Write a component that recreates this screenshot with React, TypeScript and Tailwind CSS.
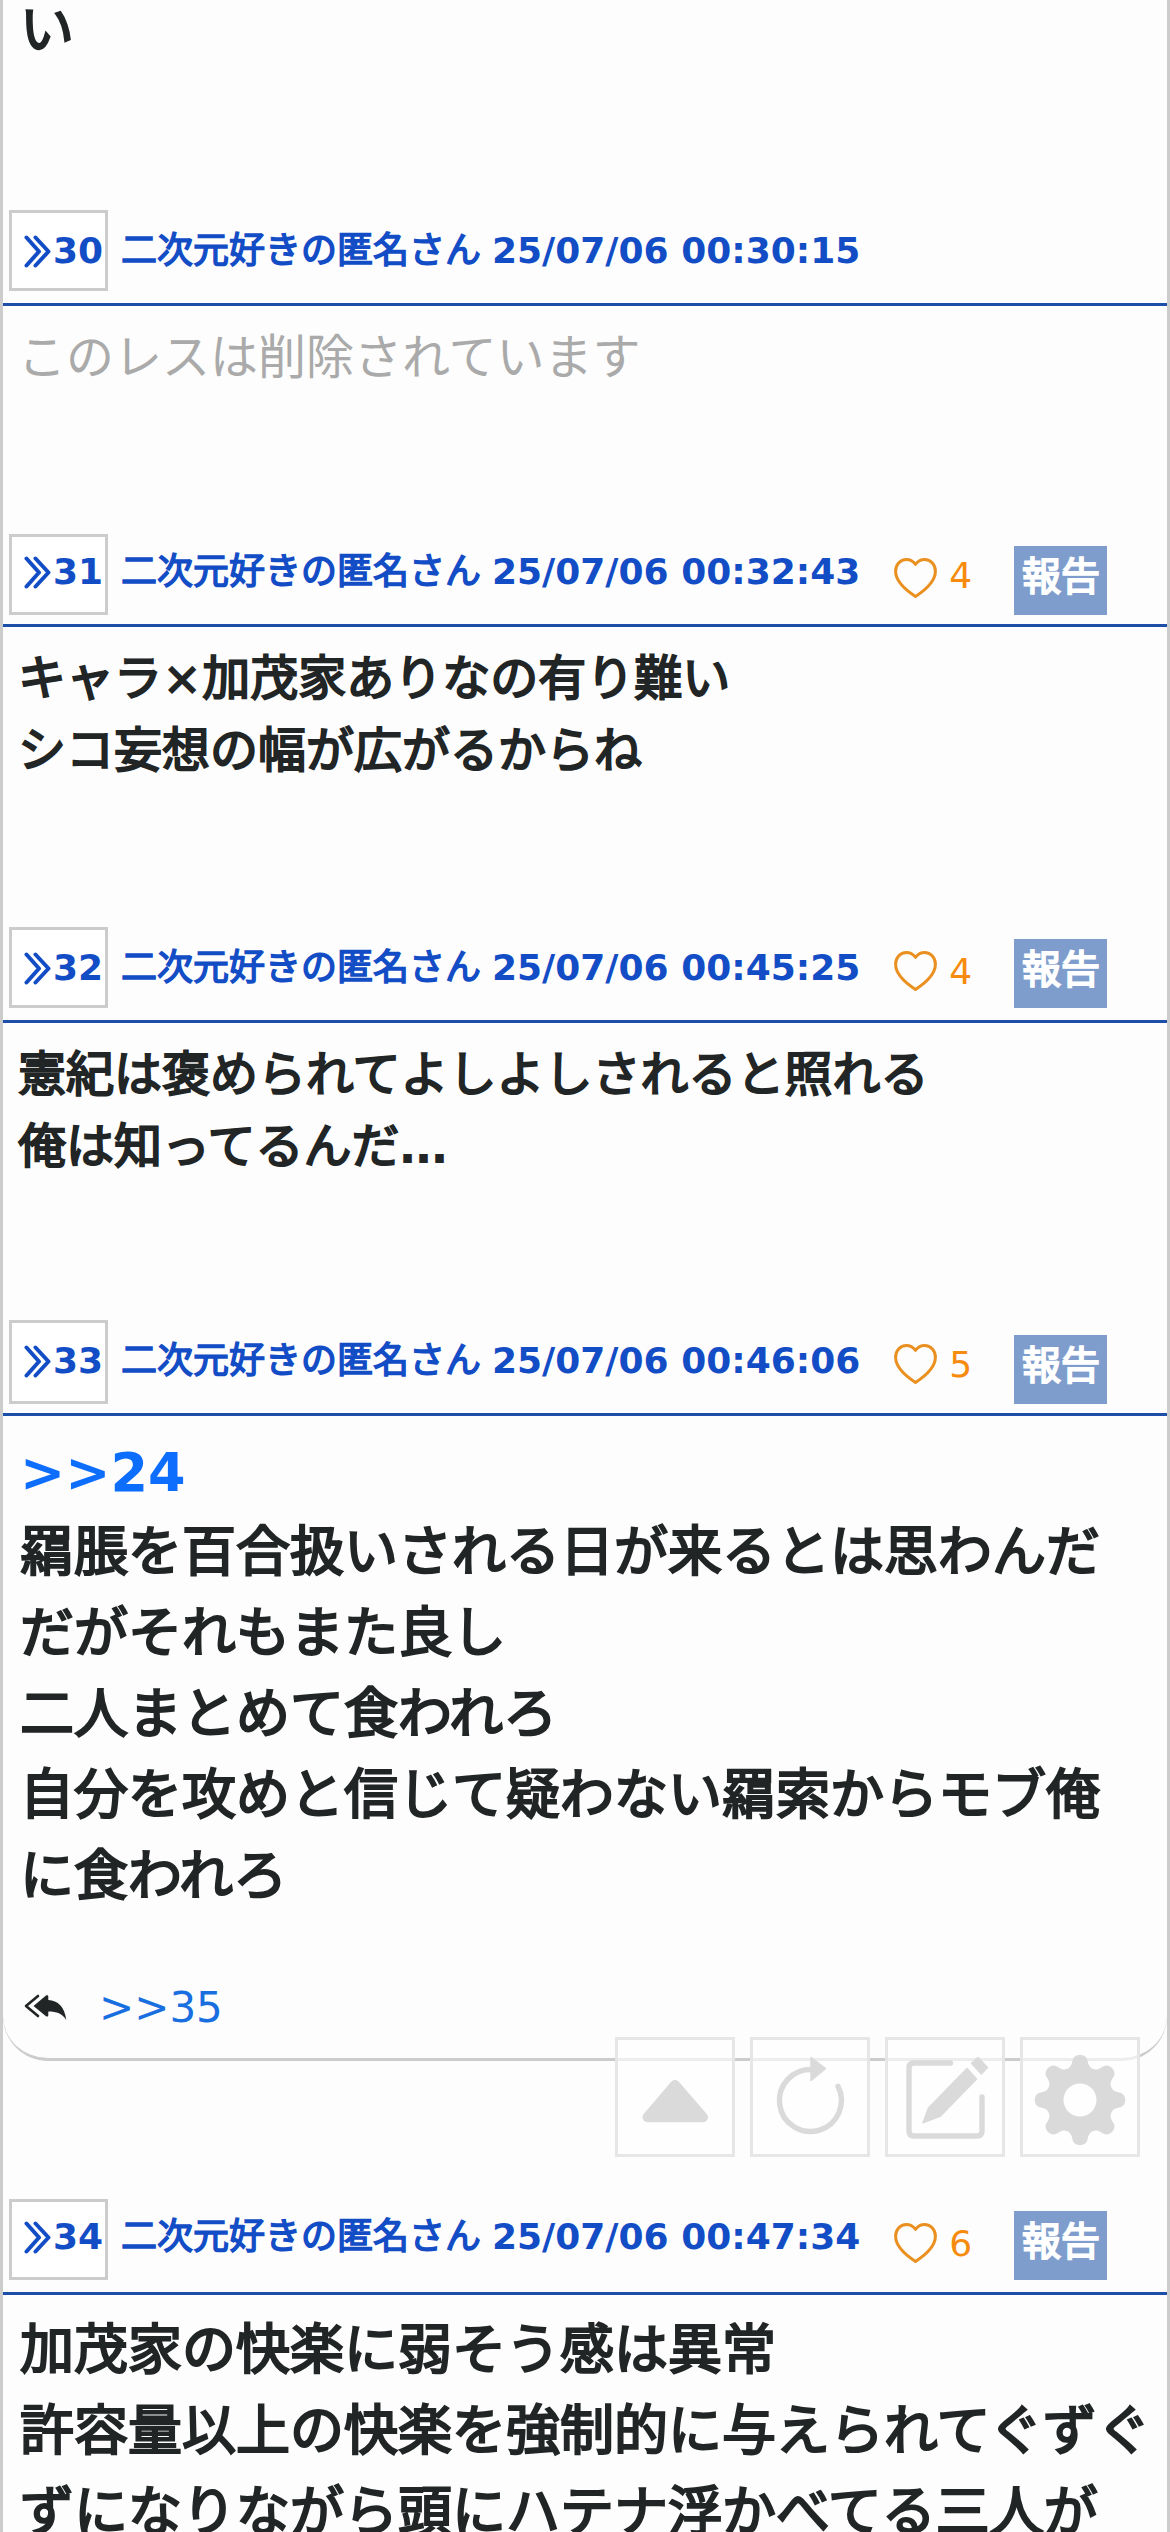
type Post = {
    id: number
    date: string
    likes?: number
    boxClass: string
    nameClass: string
    heartClass: string
    reportClass: string
    bodyClass: string
    textClass: string
    anchor?: string
    lines: string[]
    replies?: string
}

const posts: Post[] = [
    {
        id: 30,
        date: "25/07/06 00:30:15",
        boxClass: "h-[81px]",
        nameClass: "mt-[14px]",
        heartClass: "mt-6",
        reportClass: "mt-[15px]",
        bodyClass: "h-[225px]",
        textClass: "text-[48px] leading-[72px] text-[#aaaaaa]",
        lines: ["このレスは削除されています"],
    },
    {
        id: 31,
        date: "25/07/06 00:32:43",
        likes: 4,
        boxClass: "mt-[3px] h-[81px]",
        nameClass: "mt-[14px]",
        heartClass: "mt-[27px]",
        reportClass: "mt-[15px]",
        bodyClass: "h-[300px]",
        textClass: "text-[48px] leading-[72px] text-[#212525] [-webkit-text-stroke:2px]",
        lines: ["キャラ×加茂家ありなの有り難い", "シコ妄想の幅が広がるからね"],
    },
    {
        id: 32,
        date: "25/07/06 00:45:25",
        likes: 4,
        boxClass: "h-[81px]",
        nameClass: "mt-[14px]",
        heartClass: "mt-6",
        reportClass: "mt-3",
        bodyClass: "h-[297px]",
        textClass: "text-[48px] leading-[72px] text-[#212525] [-webkit-text-stroke:2px]",
        lines: ["憲紀は褒められてよしよしされると照れる", "俺は知ってるんだ…"],
    },
    {
        id: 33,
        date: "25/07/06 00:46:06",
        likes: 5,
        boxClass: "h-[84px]",
        nameClass: "mt-[14px]",
        heartClass: "mt-6",
        reportClass: "mt-[15px]",
        bodyClass: "mb-[138px] h-[645px] rounded-b-[45px] border-b-[3px] border-[#cccccc]",
        textClass: "pl-0.5 text-[54px] leading-[81px] text-[#212525] [-webkit-text-stroke:2.2px]",
        anchor: ">>24",
        lines: [
            "羂脹を百合扱いされる日が来るとは思わんだ",
            "だがそれもまた良し",
            "二人まとめて食われろ",
            "自分を攻めと信じて疑わない羂索からモブ俺",
            "に食われろ",
        ],
        replies: ">>35",
    },
    {
        id: 34,
        date: "25/07/06 00:47:34",
        likes: 6,
        boxClass: "h-[81px]",
        nameClass: "mt-[11px]",
        heartClass: "mt-6",
        reportClass: "mt-3",
        bodyClass: "h-[300px]",
        textClass: "pl-0.5 text-[54px] leading-[81px] text-[#212525] [-webkit-text-stroke:2.2px]",
        lines: [
            "加茂家の快楽に弱そう感は異常",
            "許容量以上の快楽を強制的に与えられてぐずぐ",
            "ずになりながら頭にハテナ浮かべてる三人が",
        ],
    },
]

// eight soft teeth around the centre of the 120px button
const gearOutline = Array.from({ length: 240 }, (_, i) => {
    const t = (i / 240) * Math.PI * 2
    const a = t + 0.03 * Math.sin(t * 16)
    const r = 39.5 + 5.7 * Math.cos(t * 8)
    return `${(60 + r * Math.sin(a)).toFixed(2)} ${(63 - r * Math.cos(a)).toFixed(2)}`
}).join("L")

function ChevronsIcon() {
    return (
        <svg className="h-[33px] w-7 shrink-0" viewBox="0 0 28 33" fill="none" stroke="currentColor" strokeWidth="4" strokeLinecap="round" strokeLinejoin="round">
            <path d="M3.5 2.5 16 16.5 3.5 30.5M12.5 2.5 25.500 16.5 12.5 30.5" />
        </svg>
    )
}

function HeartIcon() {
    return (
        <svg className="h-10 w-[43px] shrink-0" viewBox="0 0 43 40" fill="none" stroke="#ea9020" strokeWidth="3" strokeLinejoin="round">
            <path d="M21.5 6.3C19 3.3 16 1.6 12.5 1.6 6 1.6 1.6 6.8 1.6 13.2c0 9.8 8.3 17.600 19.9 25.2 11.6-7.6 19.9-15.4 19.9-25.2C41.4 6.8 37 1.6 30.5 1.6 27 1.6 24 3.3 21.5 6.3Z" />
        </svg>
    )
}

function ReplyAllIcon() {
    return (
        <svg className="h-7 w-11 shrink-0" viewBox="0 0 44 28" fill="#212525">
            <path d="M9.5 12 22 1.6c1-.8 2.3-.3 2.3 1V6c9.5.4 16.5 7 18 20-4-6.500-9.500-8.500-18-8.500v3.800c0 1.300-1.300 1.700-2.300.9Z" />
            <path d="M14 2 2 12 14 22" fill="none" stroke="#212525" strokeWidth="2.6" strokeLinecap="round" strokeLinejoin="round" />
        </svg>
    )
}

function PostHeader({ post }: { post: Post }) {
    return (
        <header className="flex h-24 items-start border-b-[3px] border-[#1d4fa8] pl-1.5 text-[36px] leading-[54px] text-[#134dc6]">
            <div className={`w-[99px] shrink-0 border-[3px] border-[#cccccc] bg-white ${post.boxClass}`} />
            <div className={`-ml-[85px] flex shrink-0 items-center font-bold ${post.nameClass}`}>
                <ChevronsIcon />
                <span className="ml-0.5 w-[68px]">{post.id}</span>
                <span className="font-normal [-webkit-text-stroke:1.5px]">二次元好きの匿名さん</span>
                <span className="ml-[11px]">{post.date}</span>
            </div>
            {post.likes && (
                <>
                    <div className={`ml-[34px] ${post.heartClass}`}>
                        <HeartIcon />
                    </div>
                    <span className="mt-[18px] ml-3 text-[#f78b0e]">{post.likes}</span>
                    <div className={`mr-[60px] ml-auto h-[69px] w-[93px] bg-[#7f9dcc] pl-2 text-[39px] leading-[62px] text-white [-webkit-text-stroke:1.8px] ${post.reportClass}`}>
                        報告
                    </div>
                </>
            )}
        </header>
    )
}

// × and … come from the latin font, which has a real bold
function BodyLine({ text, className }: { text: string; className: string }) {
    return (
        <p className={className}>
            {text.split(/([×…])/).map((part, i) =>
                i % 2 === 1 ? (
                    <b key={i} className="font-bold [-webkit-text-stroke:0]">{part}</b>
                ) : (
                    part
                )
            )}
        </p>
    )
}

function PostItem({ post }: { post: Post }) {
    return (
        <article>
            <PostHeader post={post} />
            <div className={`pt-4 pl-[15px] whitespace-nowrap ${post.bodyClass}`}>
                {post.anchor && (
                    <p className="pl-0.5 text-[54px] leading-[81px] font-bold text-[#0d6efd]">{post.anchor}</p>
                )}
                <div className="-mt-px">
                    {post.lines.map((line) => (
                        <BodyLine key={line} text={line} className={post.textClass} />
                    ))}
                </div>
                {post.replies && (
                    <div className="mt-[59px] flex items-center pl-1.5">
                        <ReplyAllIcon />
                        <span className="ml-[31px] text-[42px] leading-[63px] text-[#196fe0]">{post.replies}</span>
                    </div>
                )}
            </div>
        </article>
    )
}

function FloatingMenu() {
    const button = "h-[120px] w-[120px] border-[3px] border-[#e6e6e6] bg-white/65"
    const icon = "-m-[3px] h-[120px] w-[120px] max-w-none"
    return (
        <nav className="absolute top-[2037px] left-[612px] flex gap-[15px] text-[#dadada]">
            <div className={button}>
                <svg className={icon} viewBox="0 0 120 120" fill="currentColor" stroke="currentColor" strokeWidth="10" strokeLinejoin="round">
                    <path d="M60 48 88 80.3H32.5Z" />
                </svg>
            </div>
            <div className={button}>
                <svg className={icon} viewBox="0 0 120 120" fill="none" stroke="currentColor" strokeWidth="5.4" strokeLinecap="round">
                    <path d="M62 32.5A31 31 0 1 0 88 49.3" />
                    <path d="M61 20.5 75.5 31.7 61 43.5Z" fill="currentColor" strokeWidth="1.5" strokeLinejoin="round" />
                </svg>
            </div>
            <div className={button}>
                <svg className={icon} viewBox="0 0 120 120" fill="none" stroke="currentColor" strokeWidth="5.4" strokeLinecap="round">
                    <path d="M65.5 26H29q-5 0-5 5v63q0 5 5 5h63q5 0 5-5V60" />
                    <path d="M82 31.5 91.5 42 55.5 79 38 85.8 43.5 71Z M93 20.5 102.5 30.5 96.3 37 86.5 26.3Z" fill="currentColor" strokeWidth="1.5" strokeLinejoin="round" />
                </svg>
            </div>
            <div className={button}>
                <svg className={icon} viewBox="0 0 120 120" fill="currentColor" fillRule="evenodd">
                    <path d={`M${gearOutline}ZM43.5 63a16.5 16.5 0 1 0 33 0 16.5 16.5 0 1 0-33 0Z`} />
                </svg>
            </div>
        </nav>
    )
}

export default function App() {
    return (
        <main className="relative h-[2532px] w-[1170px] overflow-hidden border-x-[3px] border-[#cccccc] bg-[#fdfdfd] font-['DejaVu_Sans','Noto_Sans_CJK_JP',sans-serif]">
            <div className="h-[210px] overflow-hidden pl-[17px]">
                <p className="-mt-[10px] text-[54px] leading-[81px] text-[#212525] [-webkit-text-stroke:2.2px]">い</p>
            </div>
            {posts.map((post) => (
                <PostItem key={post.id} post={post} />
            ))}
            <FloatingMenu />
        </main>
    )
}
